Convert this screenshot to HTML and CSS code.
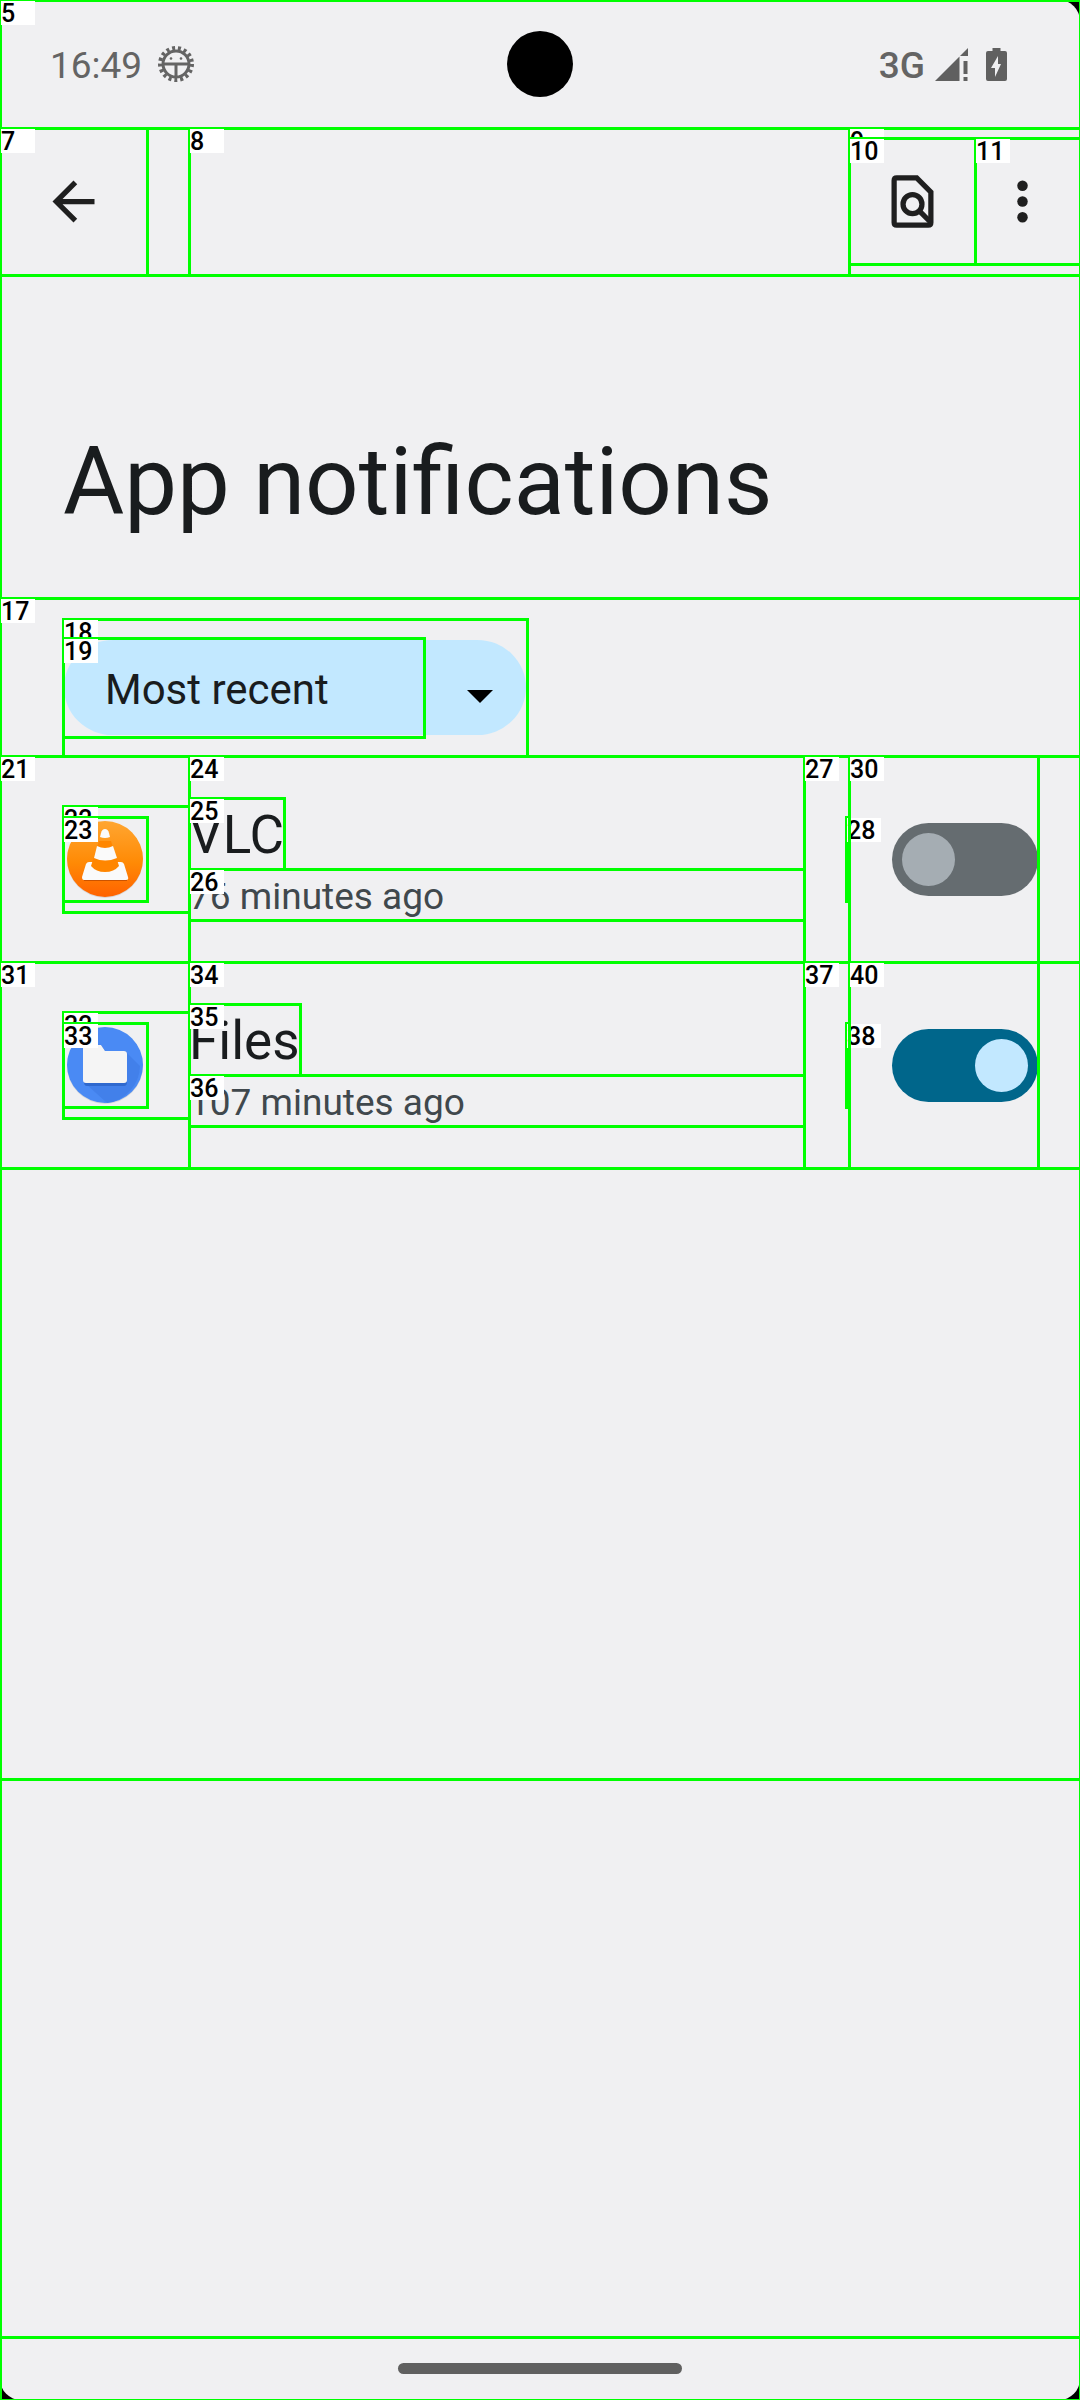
FILE: index.html
```html
<!DOCTYPE html>
<html lang="en">
<head>
<meta charset="utf-8">
<meta name="viewport" content="width=device-width, initial-scale=1">
<title>App notifications</title>
<link rel="stylesheet" href="styles.css">
</head>
<body>
<div class="screen node">
  <header class="status node">
    <span class="tag">5</span>
    <div class="status-side">
      <time class="clock">16:49</time>
      <svg class="gear" viewBox="0 0 36 36" aria-hidden="true">
        <circle cx="18" cy="18" r="13" fill="none" stroke="#646464" stroke-width="3"/>
        <circle cx="18" cy="18" r="16" fill="none" stroke="#646464" stroke-width="4" stroke-dasharray="3 2.914"/>
        <path d="M4 18h28M18 18v14" stroke="#646464" stroke-width="3"/>
        <circle cx="13" cy="12.500" r="1.300" fill="#646464"/><circle cx="23" cy="12.500" r="1.300" fill="#646464"/>
      </svg>
    </div>
    <div class="camera"></div>
    <div class="status-side status-end">
      <span class="network">3G</span>
      <svg class="signal" viewBox="0 0 33 33" aria-hidden="true"><path fill="#606060" d="M0 33 24.500 8.500V33zM25 8 33 0v8zM28.500 13h4v13h-4zM28.500 29h4v4h-4z"/></svg>
      <svg class="battery" viewBox="0 0 21 33" aria-hidden="true"><path fill="#606060" fill-rule="evenodd" d="M6.500 0h8v3H19q2 0 2 2v26q0 2-2 2H2q-2 0-2-2V5q0-2 2-2h4.500zM12 8 5 20h4v9l6-13h-3z"/></svg>
    </div>
  </header>

  <nav class="toolbar node">
    <button class="back node" aria-label="Navigate up">
      <span class="tag">7</span>
      <svg class="icon" viewBox="0 0 24 24" aria-hidden="true"><path d="M20 11H7.830l5.590-5.590L12 4l-8 8 8 8 1.410-1.410L7.830 13H20z"/></svg>
    </button>
    <div class="toolbar-title node"><span class="tag">8</span></div>
    <div class="actions node">
      <span class="tag">9</span>
      <button class="search node" aria-label="Search settings">
        <span class="tag">10</span>
        <svg class="icon outline" viewBox="0 0 24 24" aria-hidden="true"><path d="M13.600 3H6Q5 3 5 4v16q0 1 1 1h12q1 0 1-1V8.400z"/><circle cx="12" cy="13" r="3.600"/><path d="M14.500 15.500 19 20"/></svg>
      </button>
      <button class="more node" aria-label="More options">
        <span class="tag">11</span>
        <svg class="icon" viewBox="0 0 24 24" aria-hidden="true"><circle cx="12" cy="6" r="2"/><circle cx="12" cy="12" r="2"/><circle cx="12" cy="18" r="2"/></svg>
      </button>
    </div>
  </nav>

  <div class="headline"><h1>App notifications</h1></div>

  <main class="list node">
    <section class="filter node">
      <span class="tag">17</span>
      <div class="spinner node">
        <span class="tag">18</span>
        <div class="pill">
          <select class="sort" aria-label="Sort apps"><option>Most recent</option><option>Most frequent</option><option>All apps</option></select>
          <svg class="caret" viewBox="0 0 26 13" aria-hidden="true"><path d="M0 0h26L13 13z"/></svg>
        </div>
        <div class="sort-frame node"><span class="tag">19</span></div>
      </div>
    </section>

    <section class="row node">
      <span class="tag">21</span>
      <div class="row-icon node">
        <span class="tag">22</span>
        <div class="app-icon node">
          <span class="tag">23</span>
          <svg viewBox="0 0 84 84" aria-hidden="true">
            <defs><linearGradient id="orange" x1="0" y1="0" x2="0" y2="1"><stop offset="0" stop-color="#ffa631"/><stop offset=".55" stop-color="#ff8a05"/><stop offset="1" stop-color="#ff6200"/></linearGradient></defs>
            <circle cx="42" cy="43" r="38" fill="#000" opacity=".1"/>
            <circle cx="42" cy="42" r="38" fill="url(#orange)"/>
            <path d="M20 60h44v4H21z" fill="#cb5300"/>
            <path d="M26 45q-2 0-3 2l-4 13q0 3 2 3h42q3 0 2-3l-4-13q-1-2-3-2z" fill="#fafafa"/>
            <path d="M36 24h12l8 25q-5 6-14 6t-14-6z" fill="#ff8600"/>
            <path d="M38 16q1-4 4-4t4 4l1 4q-5 2-10 0z" fill="#fafafa"/>
            <path d="M34 29q8 4 16 0l4 12q-12 5-23 0z" fill="#fafafa"/>
          </svg>
        </div>
      </div>
      <div class="row-text node">
        <span class="tag">24</span>
        <h2 class="name node"><span class="tag">25</span><label for="vlc">VLC</label></h2>
        <p class="summary node"><span class="tag">26</span>76 minutes ago</p>
      </div>
      <div class="gutter node"><span class="tag">27</span><div class="divider node"><span class="tag">28</span></div></div>
      <div class="row-switch node"><span class="tag">30</span><input class="switch" id="vlc" type="checkbox" role="switch"></div>
    </section>

    <section class="row node">
      <span class="tag">31</span>
      <div class="row-icon node">
        <span class="tag">32</span>
        <div class="app-icon node">
          <span class="tag">33</span>
          <svg viewBox="0 0 84 84" aria-hidden="true">
            <circle cx="42" cy="43" r="38" fill="#000" opacity=".1"/>
            <circle cx="42" cy="42" r="38" fill="#4a8af4"/>
            <path d="M63 29 77 43A38 38 0 0 1 44 80L22 60z" fill="#4280ea"/>
            <path d="M21 25q0-3 3-3h14l4 6h19q3 0 3 3v28q0 4-3 4H24q-3 0-3-4z" fill="#2f69cf"/>
            <path d="M20 25q0-3 3-3h15l4 6h19q3 0 3 3v26q0 3-3 3H23q-3 0-3-3z" fill="#f5f5f5"/>
          </svg>
        </div>
      </div>
      <div class="row-text node">
        <span class="tag">34</span>
        <h2 class="name node"><span class="tag">35</span><label for="files">Files</label></h2>
        <p class="summary node"><span class="tag">36</span>107 minutes ago</p>
      </div>
      <div class="gutter node"><span class="tag">37</span><div class="divider node"><span class="tag">38</span></div></div>
      <div class="row-switch node"><span class="tag">40</span><input class="switch" id="files" type="checkbox" role="switch" checked></div>
    </section>
  </main>

  <div class="below node"></div>
  <footer class="gesture"><div class="handle"></div></footer>
</div>
</body>
</html>
```
FILE: styles.css
```css
* { box-sizing: border-box; }

html { background: #000; }
body {
  margin: 0;
  overflow-x: hidden;
  color: #191c1e;
  font-family: Roboto, "Liberation Sans", sans-serif;
}

h1, h2, p { margin: 0; font-weight: 400; }
button { border: 0; padding: 0; background: none; font: inherit; }
svg { display: block; }

/* Layout inspector: a green frame centred on each box edge, with its number */
.node { position: relative; }
.node::before {
  content: "";
  position: absolute;
  inset: -1px -2px -2px -1px;
  border: 3px solid #0f0;
  pointer-events: none;
}
.tag {
  position: absolute;
  top: 1px;
  left: 1px;
  width: 34px;
  height: 24px;
  background: #fff;
  color: #000;
  font-size: 25px;
  font-weight: 500;
  line-height: 26px;
  text-align: left;
  pointer-events: none;
}

.screen {
  display: flex;
  flex-direction: column;
  min-height: 100vh;
  border-radius: 21px;
  background: #f0f0f2;
}
.screen::before { inset: -1px -2px -1px -1px; border-bottom-width: 2px; }

/* Status bar */
.status {
  display: grid;
  grid-template-columns: 1fr 66px 1fr;
  align-items: center;
  height: 128px;
}
.status-side {
  display: flex;
  align-items: center;
  gap: 16px;
  padding-left: 50px;
  color: #646464;
}
.status-end { justify-content: flex-end; padding: 0 73px 0 0; gap: 10px; }
.clock, .network { padding-top: 4px; font-size: 37px; line-height: 44px; }
.network { font-weight: 500; }
.gear { width: 36px; height: 36px; }
.signal { width: 33px; height: 33px; }
.battery { width: 21px; height: 33px; margin-left: 8px; }
.camera { width: 66px; height: 66px; border-radius: 50%; background: #000; }

/* Toolbar */
.toolbar { display: flex; height: 147px; }
.icon { width: 63px; height: 63px; fill: #1f1f1f; }
.outline { fill: none; stroke: #1f1f1f; stroke-width: 2; }
.back, .search, .more { display: flex; align-items: center; justify-content: center; }
.back { width: 147px; margin-right: 42px; }
.toolbar-title { flex: 1; }
.actions { display: flex; width: 231px; padding: 10px 0 11px; }
.search { width: 126px; }
.more { width: 105px; padding-right: 11px; }

.headline { height: 323px; padding: 151px 63px 0; }
h1 { font-size: 94px; line-height: 112px; }

/* List */
.list { flex: 1181 1 0; }
.below { flex: 558 1 0; }

.filter { height: 158px; padding: 21px 63px 0; }
.spinner { width: 464px; height: 137px; padding-top: 19px; }
.pill {
  display: grid;
  align-items: center;
  height: 99px;
  border: 2px solid transparent;
  border-width: 2px 1px;
  border-radius: 50px;
  background: #c2e8ff padding-box;
}
.sort, .caret { grid-area: 1 / 1; }
.sort {
  appearance: none;
  width: 100%;
  height: 95px;
  padding: 4px 100px 0 41px;
  border: 0;
  background: none;
  color: #191c1e;
  font: 42px Roboto, "Liberation Sans", sans-serif;
}
.caret { width: 26px; height: 13px; justify-self: end; margin: 18px 33px 0 0; pointer-events: none; }
.sort-frame { position: absolute; top: 19px; left: 0; width: 361px; height: 99px; pointer-events: none; }

.row { display: flex; align-items: center; height: 206px; padding: 0 42px 0 63px; }
.row-icon { width: 126px; height: 106px; padding: 11px 0; }
.app-icon { width: 84px; height: 84px; }
.row-text { flex: 1; height: 206px; padding: 42px 0; }
.name { width: fit-content; padding-top: 4px; font-size: 53px; line-height: 67px; }
.summary { padding-top: 4px; color: #40484d; font-size: 37px; line-height: 47px; }
.gutter { display: flex; align-items: center; justify-content: flex-end; width: 45px; height: 206px; }
.divider { width: 3px; height: 84px; }
.row-switch { display: flex; align-items: center; justify-content: flex-end; width: 189px; height: 206px; }

.switch {
  appearance: none;
  display: flex;
  width: 146px;
  height: 73px;
  margin: 0;
  padding: 10px;
  border-radius: 37px;
  background: #656c70;
}
.switch::before { content: ""; width: 53px; height: 53px; border-radius: 50%; background: #a5adb3; }
.switch:checked { justify-content: flex-end; background: #00668b; }
.switch:checked::before { background: #c2e8ff; }

/* Gesture bar */
.gesture { display: flex; justify-content: center; height: 63px; padding-top: 26px; }
.handle { width: 284px; height: 11px; border-radius: 6px; background: #606060; }
```
